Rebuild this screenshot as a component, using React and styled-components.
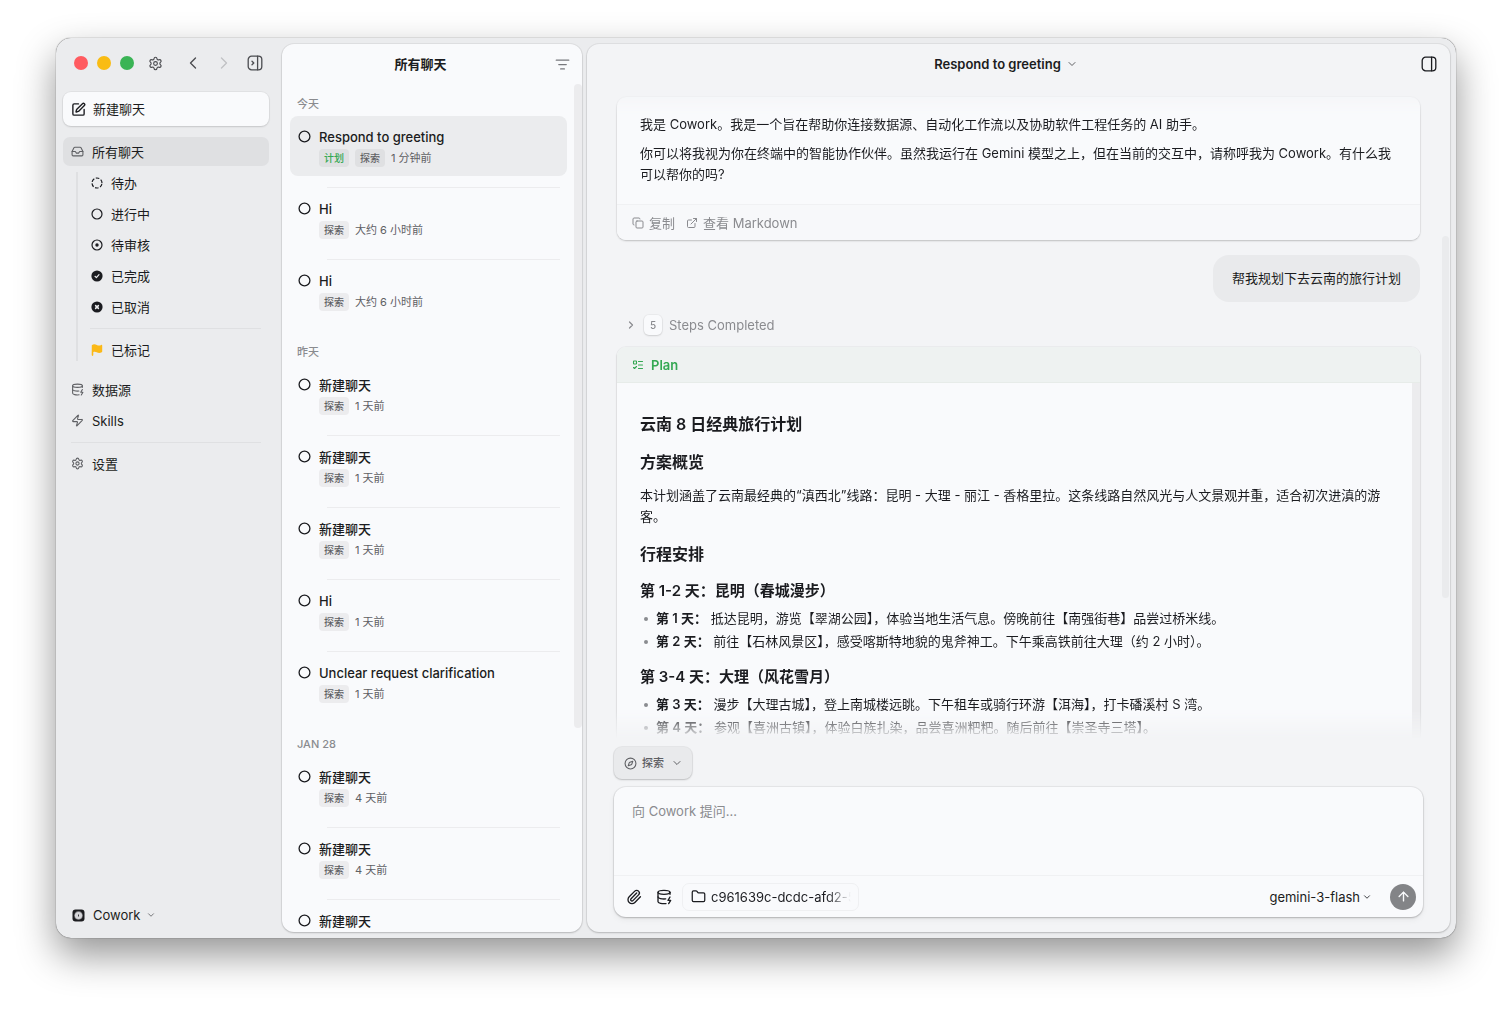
import { Fragment } from "react";
import styled, { createGlobalStyle, css } from "styled-components";
import {
  ArrowUp,
  ChevronDown,
  ChevronLeft,
  ChevronRight,
  Circle,
  Compass,
  Copy,
  DatabaseZap,
  ExternalLink,
  Folder,
  Inbox,
  ListFilter,
  ListTodo,
  Paperclip,
  Settings,
  SquarePen,
  Zap,
} from "lucide-react";

const colors = {
  window: "#ebecee",
  panel: "#f9fafc",
  main: "#f3f4f6",
  text: "#1b1c20",
  gray: "#5f6064",
  muted: "#8a8b8f",
  line: "#dfe0e2",
  softLine: "#ececee",
  green: "#34a853",
};

const groups = [
  {
    label: "今天",
    chats: [
      { title: "Respond to greeting", time: "1 分钟前", plan: true, active: true },
      { title: "Hi", time: "大约 6 小时前" },
      { title: "Hi", time: "大约 6 小时前" },
    ],
  },
  {
    label: "昨天",
    chats: [
      { title: "新建聊天", time: "1 天前" },
      { title: "新建聊天", time: "1 天前" },
      { title: "新建聊天", time: "1 天前" },
      { title: "Hi", time: "1 天前" },
      { title: "Unclear request clarification", time: "1 天前" },
    ],
  },
  {
    label: "JAN 28",
    chats: [
      { title: "新建聊天", time: "4 天前" },
      { title: "新建聊天", time: "4 天前" },
      { title: "新建聊天" },
    ],
  },
];

const days = [
  {
    title: "第 1-2 天：昆明（春城漫步）",
    items: [
      ["第 1 天：", "抵达昆明，游览【翠湖公园】，体验当地生活气息。傍晚前往【南强街巷】品尝过桥米线。"],
      ["第 2 天：", "前往【石林风景区】，感受喀斯特地貌的鬼斧神工。下午乘高铁前往大理（约 2 小时）。"],
    ],
  },
  {
    title: "第 3-4 天：大理（风花雪月）",
    items: [
      ["第 3 天：", "漫步【大理古城】，登上南城楼远眺。下午租车或骑行环游【洱海】，打卡磻溪村 S 湾。"],
      ["第 4 天：", "参观【喜洲古镇】，体验白族扎染，品尝喜洲粑粑。随后前往【崇圣寺三塔】。"],
    ],
  },
];

function PanelIcon({ withArrow }) {
  return (
    <svg width="16" height="16" viewBox="0 0 16 16" fill="none" stroke="currentColor" strokeWidth="1.3" strokeLinecap="round" strokeLinejoin="round">
      <rect x="1.2" y="1.2" width="13.6" height="13.6" rx="3.4" />
      <path d="M10.6 1.2v13.6" />
      {withArrow && <path d="M5 6.200 6.800 8 5 9.800" />}
    </svg>
  );
}

function DashedCircle() {
  return (
    <svg width="12" height="12" viewBox="0 0 12 12" fill="none" stroke="currentColor" strokeWidth="1.2">
      <circle cx="6" cy="6" r="5" strokeDasharray="3.6 1.636" strokeDashoffset="-.8" />
    </svg>
  );
}

function ReviewIcon() {
  return (
    <svg width="12" height="12" viewBox="0 0 12 12" fill="none">
      <circle cx="6" cy="6" r="5" stroke="currentColor" strokeWidth="1.2" />
      <circle cx="6" cy="6" r="1.7" fill="currentColor" />
    </svg>
  );
}

function DoneIcon() {
  return (
    <svg width="12" height="12" viewBox="0 0 12 12" fill="none">
      <circle cx="6" cy="6" r="5.6" fill="currentColor" />
      <path d="m4 6.3 1.4 1.3L8 4.7" stroke={colors.window} strokeWidth="1.2" strokeLinecap="round" strokeLinejoin="round" />
    </svg>
  );
}

function CancelIcon() {
  return (
    <svg width="12" height="12" viewBox="0 0 12 12" fill="none">
      <circle cx="6" cy="6" r="5.6" fill="currentColor" />
      <path d="m4.6 4.6 2.8 2.8M7.4 4.6 4.6 7.4" stroke={colors.window} strokeWidth="1.5" strokeLinecap="round" />
    </svg>
  );
}

function FlagIcon() {
  return (
    <svg width="12" height="12" viewBox="0 0 12 12">
      <path
        d="M.8 1.2C2.4-.1 4.200.1 5.800 1c1.500.8 3 .7 4.400-.1.500-.3 1 0 1 .5v6c0 .4-.2.7-.5.9-1.600.9-3.300.9-5 0-1.200-.6-2.300-.7-3.400-.2v3c0 .5-.3.8-.8.8s-.8-.3-.8-.8z"
        fill="#fbb917"
      />
    </svg>
  );
}

function WorkspaceIcon() {
  return (
    <svg width="13" height="13" viewBox="0 0 13 13">
      <rect x=".5" y=".5" width="12" height="12" rx="3" fill="#1d1d20" />
      <circle cx="6.5" cy="6.5" r="4.4" fill="#77777b" />
      <circle cx="6.5" cy="6.5" r="3.6" fill="#d6d6d9" />
      <path d="M6.500 5.500v2" stroke="#3a3a3e" strokeWidth="1" />
    </svg>
  );
}

function Sidebar() {
  return (
    <SidebarBox>
      <TitleBar>
        <Lights>
          <Light $color="#ff5b60" />
          <Light $color="#f9bc14" />
          <Light $color="#3ab455" />
        </Lights>
        <IconBtn aria-label="设置"><Settings size={15} strokeWidth={1.8} /></IconBtn>
        <NavBtns>
          <IconBtn aria-label="后退"><ChevronLeft size={20} strokeWidth={1.6} /></IconBtn>
          <IconBtn aria-label="前进" $faded><ChevronRight size={20} strokeWidth={1.6} /></IconBtn>
          <IconBtn aria-label="收起侧栏"><PanelIcon withArrow /></IconBtn>
        </NavBtns>
      </TitleBar>
      <NewChat>
        <SquarePen size={15} strokeWidth={2.2} />
        新建聊天
      </NewChat>
      <Nav>
        <NavRow $active><Inbox size={13} />所有聊天</NavRow>
        <Tree>
          <TreeLine />
          <TreeList>
            <SubRow><DashedCircle />待办</SubRow>
            <SubRow><Circle size={12} strokeWidth={2.4} />进行中</SubRow>
            <SubRow><ReviewIcon />待审核</SubRow>
            <SubRow><DoneIcon />已完成</SubRow>
            <SubRow><CancelIcon />已取消</SubRow>
            <Divider />
            <SubRow><FlagIcon />已标记</SubRow>
          </TreeList>
        </Tree>
        <NavRow><DatabaseZap size={13} />数据源</NavRow>
        <NavRow><Zap size={13} />Skills</NavRow>
        <Divider $inset />
        <NavRow><Settings size={13} />设置</NavRow>
      </Nav>
      <Workspace>
        <WorkspaceIcon />
        Cowork
        <ChevronDown size={10} />
      </Workspace>
    </SidebarBox>
  );
}

function ChatRow({ chat }) {
  return (
    <ChatItem $active={chat.active}>
      <Circle size={13} strokeWidth={2.4} />
      <ChatInfo>
        <ChatTitle>{chat.title}</ChatTitle>
        {chat.time && (
          <ChatMeta>
            {chat.plan && <Tag $active $green>计划</Tag>}
            <Tag $active={chat.active}>探索</Tag>
            <span>{chat.time}</span>
          </ChatMeta>
        )}
      </ChatInfo>
    </ChatItem>
  );
}

function ChatList() {
  return (
    <ListPanel>
      <ListHeader>
        <ListTitle>所有聊天</ListTitle>
        <FilterBtn aria-label="筛选"><ListFilter size={15} strokeWidth={2} /></FilterBtn>
      </ListHeader>
      <ListBody>
        <ListScroll>
          {groups.map((group) => (
            <Group key={group.label}>
              <GroupLabel>{group.label}</GroupLabel>
              {group.chats.map((chat, i) => (
                <Fragment key={i}>
                  {i > 0 && <ChatSeparator />}
                  <ChatRow chat={chat} />
                </Fragment>
              ))}
            </Group>
          ))}
        </ListScroll>
        <ListThumb />
      </ListBody>
    </ListPanel>
  );
}

function Plan() {
  return (
    <PlanCard>
      <PlanHeader>
        <ListTodo size={12} strokeWidth={2.2} />
        Plan
      </PlanHeader>
      <PlanBody>
        <PlanText>
          <Heading>云南 8 日经典旅行计划</Heading>
          <Heading>方案概览</Heading>
          <Paragraph>
            本计划涵盖了云南最经典的“滇西北”线路：昆明 - 大理 - 丽江 - 香格里拉。这条线路自然风光与人文景观并重，适合初次进滇的游客。
          </Paragraph>
          <Heading>行程安排</Heading>
          {days.map((day) => (
            <Fragment key={day.title}>
              <DayTitle>{day.title}</DayTitle>
              <DayList>
                {day.items.map(([label, text]) => (
                  <li key={label}>
                    <span>
                      <strong>{label}</strong> {text}
                    </span>
                  </li>
                ))}
              </DayList>
            </Fragment>
          ))}
        </PlanText>
        <PlanThumb />
      </PlanBody>
    </PlanCard>
  );
}

function Composer() {
  return (
    <Dock>
      <ModeBtn>
        <Compass size={13} />
        探索
        <ChevronDown size={12} />
      </ModeBtn>
      <ComposerBox>
        <Prompt aria-label="消息" placeholder="向 Cowork 提问..." />
        <ComposerBar>
          <ToolBtn aria-label="添加附件"><Paperclip size={16} /></ToolBtn>
          <ToolBtn aria-label="数据源"><DatabaseZap size={16} /></ToolBtn>
          <FolderChip>
            <Folder size={15} strokeWidth={2} />
            <FolderName>c961639c-dcdc-afd2-5</FolderName>
          </FolderChip>
          <ModelBtn>
            gemini-3-flash
            <ChevronDown size={10} />
          </ModelBtn>
          <SendBtn aria-label="发送"><ArrowUp size={15} strokeWidth={2.2} /></SendBtn>
        </ComposerBar>
      </ComposerBox>
    </Dock>
  );
}

export default function App() {
  return (
    <>
      <GlobalStyle />
      <Desktop>
        <Window lang="zh-CN">
          <Sidebar />
          <ChatList />
          <MainPanel>
            <MainHeader>
              <MainTitle>
                Respond to greeting
                <ChevronDown size={12} />
              </MainTitle>
              <HeaderBtn aria-label="侧面板"><PanelIcon /></HeaderBtn>
            </MainHeader>
            <Thread>
              <Card>
                <CardText>
                  <Paragraph>
                    我是 Cowork。我是一个旨在帮助你连接数据源、自动化工作流以及协助软件工程任务的 AI 助手。
                  </Paragraph>
                  <Paragraph>
                    你可以将我视为你在终端中的智能协作伙伴。虽然我运行在 Gemini 模型之上，但在当前的交互中，请称呼我为 Cowork。有什么我可以帮你的吗?
                  </Paragraph>
                </CardText>
                <CardFooter>
                  <CardAction><Copy size={12} />复制</CardAction>
                  <CardAction><ExternalLink size={12} />查看 Markdown</CardAction>
                </CardFooter>
              </Card>
              <Bubble>帮我规划下去云南的旅行计划</Bubble>
              <Steps>
                <ChevronRight size={12} strokeWidth={2.4} />
                <StepCount>5</StepCount>
                Steps Completed
              </Steps>
              <Plan />
            </Thread>
            <ThreadThumb />
            <Composer />
          </MainPanel>
        </Window>
      </Desktop>
    </>
  );
}

const GlobalStyle = createGlobalStyle`
  * {
    box-sizing: border-box;
  }
  body {
    margin: 0;
    background: #fff;
  }
  body, button, textarea {
    font-family: Inter, "Noto Sans CJK SC", sans-serif;
    font-size: 13px;
    line-height: 20px;
    color: ${colors.text};
  }
  button {
    padding: 0;
    border: none;
    background: none;
    cursor: pointer;
  }
  svg {
    flex-shrink: 0;
  }
`;
const Desktop = styled.div`
  display: flex;
  height: 100vh;
  padding: 38px 56px 74px;
`;
const Window = styled.div`
  flex: 1;
  min-width: 0;
  display: grid;
  grid-template-columns: 220px 300px minmax(0, 1fr);
  column-gap: 5px;
  padding: 6px 6px 6px 1px;
  border-radius: 15px;
  background: ${colors.window};
  box-shadow: 0 0 1px rgba(0, 0, 0, 0.8), 0 17px 38px rgba(0, 0, 0, 0.42);
`;
const SidebarBox = styled.aside`
  display: flex;
  flex-direction: column;
  min-height: 0;
  padding: 0 8px 5px 6px;
`;
const TitleBar = styled.div`
  display: flex;
  align-items: center;
  height: 38px;
  padding: 0 4px 0 11px;
`;
const Lights = styled.div`
  display: flex;
  gap: 9px;
  margin-right: 11px;
`;
const Light = styled.span`
  width: 14px;
  height: 14px;
  border-radius: 50%;
  background: ${(props) => props.$color};
`;
const IconBtn = styled.button`
  display: flex;
  align-items: center;
  justify-content: center;
  width: 20px;
  height: 24px;
  color: ${(props) => (props.$faded ? "#c0c1c4" : "#4b4c50")};
`;
const NavBtns = styled.div`
  display: flex;
  gap: 11px;
  margin-left: auto;
`;
const NewChat = styled.button`
  display: flex;
  align-items: center;
  gap: 7px;
  height: 34px;
  margin-top: 10px;
  padding: 0 8px;
  border-radius: 8px;
  background: ${colors.panel};
  box-shadow: 0 0 0 1px rgba(0, 0, 0, 0.04), 0 1px 2px rgba(0, 0, 0, 0.12);
`;
const Nav = styled.nav`
  display: flex;
  flex-direction: column;
  gap: 2px;
  margin-top: 11px;
`;
const NavRow = styled.button`
  display: flex;
  align-items: center;
  gap: 8px;
  height: 29px;
  padding: 0 8px;
  border-radius: 7px;
  background: ${(props) => (props.$active ? colors.line : "transparent")};
  svg {
    color: ${colors.gray};
  }
`;
const Tree = styled.div`
  display: flex;
  gap: 5px;
  margin-bottom: 9px;
  padding-left: 13px;
`;
const TreeLine = styled.span`
  width: 2px;
  margin: 4px 0 3px;
  background: ${colors.line};
`;
const TreeList = styled.div`
  flex: 1;
  display: flex;
  flex-direction: column;
  gap: 2px;
`;
const SubRow = styled(NavRow)`
  svg {
    color: ${colors.text};
  }
`;
const Divider = styled.hr`
  width: auto;
  height: 1px;
  margin: 5px 8px 4px ${(props) => (props.$inset ? "8px" : "7px")};
  border: none;
  background: ${colors.line};
`;
const Workspace = styled.button`
  display: flex;
  align-items: center;
  gap: 8px;
  height: 24px;
  margin-top: auto;
  padding: 0 9px;
  svg:last-child {
    margin-left: -3px;
    color: ${colors.gray};
  }
`;

const panel = css`
  display: flex;
  flex-direction: column;
  min-width: 0;
  min-height: 0;
  border-radius: 12px;
  overflow: hidden;
  box-shadow: 0 0 0 1px rgba(0, 0, 0, 0.05), 0 1px 2px rgba(0, 0, 0, 0.18);
`;
const ListPanel = styled.section`
  ${panel}
  background: ${colors.panel};
`;
const ListHeader = styled.header`
  display: flex;
  align-items: center;
  height: 40px;
  padding: 0 9px 0 8px;
`;
const ListTitle = styled.h1`
  flex: 1;
  margin: 0;
  font-size: 13px;
  font-weight: 600;
  text-align: center;
`;
const FilterBtn = styled(IconBtn)`
  width: 22px;
  color: #77787c;
`;
const ListBody = styled.div`
  flex: 1;
  min-height: 0;
  display: flex;
`;
const ListScroll = styled.div`
  flex: 1;
  display: flex;
  flex-direction: column;
  gap: 20px;
  padding: 8px 7px 0 8px;
  overflow: hidden;
`;
const ListThumb = styled.span`
  width: 8px;
  height: 76%;
  border-radius: 4px;
  background: ${colors.softLine};
`;
const Group = styled.div`
  flex-shrink: 0;
`;
const GroupLabel = styled.h2`
  margin: 0;
  padding-left: 7px;
  font-size: 11px;
  font-weight: 500;
  line-height: 24px;
  color: ${colors.muted};
`;
const ChatItem = styled.article`
  display: flex;
  gap: 8px;
  height: 60px;
  padding: 11px 8px 9px;
  border-radius: 8px;
  background: ${(props) => (props.$active ? colors.window : "transparent")};
  > svg {
    margin-top: 3px;
  }
`;
const ChatInfo = styled.div`
  display: flex;
  flex-direction: column;
  gap: 2px;
`;
const ChatTitle = styled.h3`
  margin: 0;
  font-size: 13px;
  font-weight: 500;
  line-height: 20px;
`;
const ChatMeta = styled.div`
  display: flex;
  align-items: center;
  gap: 6px;
  font-size: 11px;
  line-height: 18px;
  color: ${colors.gray};
`;
const Tag = styled.span`
  padding: 0 5px;
  border-radius: 4px;
  font-size: 10px;
  font-weight: 500;
  color: ${(props) => (props.$green ? colors.green : colors.gray)};
  background: ${(props) => (props.$active ? colors.line : colors.softLine)};
`;
const ChatSeparator = styled.div`
  height: 12px;
  margin: 0 7px 0 37px;
  border-bottom: 1px solid ${colors.softLine};
`;

const MainPanel = styled.main`
  ${panel}
  position: relative;
  background: ${colors.main};
`;
const MainHeader = styled.header`
  display: flex;
  align-items: center;
  justify-content: center;
  height: 40px;
  padding: 0 9px 0 8px;
`;
const MainTitle = styled.button`
  flex: 1;
  display: flex;
  align-items: center;
  justify-content: center;
  gap: 5px;
  font-weight: 600;
  svg {
    color: ${colors.gray};
  }
`;
const HeaderBtn = styled(IconBtn)`
  width: 24px;
  color: ${colors.text};
`;
const Thread = styled.div`
  flex: 1;
  min-height: 0;
  display: flex;
  flex-direction: column;
  padding: 13px 30px 0;
  overflow: hidden;
  mask-image: linear-gradient(to bottom, transparent, #000 32px, #000 calc(100% - 28px), transparent);
`;
const ThreadThumb = styled.span`
  position: absolute;
  top: 192px;
  right: 1px;
  width: 7px;
  height: 362px;
  border-radius: 4px;
  background: #eaebed;
`;
const Card = styled.article`
  flex-shrink: 0;
  border-radius: 9px;
  background: ${colors.panel};
  overflow: hidden;
  box-shadow: 0 0 0 1px rgba(0, 0, 0, 0.03), 0 1px 2px rgba(0, 0, 0, 0.2);
`;
const CardText = styled.div`
  display: flex;
  flex-direction: column;
  gap: 8px;
  padding: 17px 22px 19px 23px;
`;
const Paragraph = styled.p`
  margin: 0;
  line-height: 21px;
`;
const CardFooter = styled.footer`
  display: flex;
  align-items: center;
  gap: 11px;
  height: 36px;
  padding: 0 15px;
  border-top: 1px solid #f0f1f3;
  background: #f7f8fa;
`;
const CardAction = styled.button`
  display: flex;
  align-items: center;
  gap: 5px;
  color: ${colors.muted};
`;
const Bubble = styled.div`
  align-self: flex-end;
  flex-shrink: 0;
  margin-top: 15px;
  padding: 13px 19px;
  border-radius: 16px;
  line-height: 21px;
  background: #e9eaec;
`;
const Steps = styled.button`
  align-self: flex-start;
  flex-shrink: 0;
  display: flex;
  align-items: center;
  gap: 7px;
  height: 22px;
  margin: 12px 0 11px;
  padding-left: 8px;
  color: ${colors.muted};
`;
const StepCount = styled.span`
  width: 18px;
  height: 20px;
  border-radius: 5px;
  font-size: 10px;
  font-weight: 500;
  text-align: center;
  background: ${colors.panel};
  box-shadow: 0 0 0 1px rgba(0, 0, 0, 0.04), 0 1px 2px rgba(0, 0, 0, 0.12);
`;
const PlanCard = styled(Card)``;
const PlanHeader = styled.header`
  display: flex;
  align-items: center;
  gap: 7px;
  height: 36px;
  padding: 0 15px;
  border-bottom: 1px solid #e7ece9;
  font-weight: 600;
  color: ${colors.green};
  background: #eef2f1;
`;
const PlanBody = styled.div`
  display: flex;
`;
const PlanText = styled.div`
  flex: 1;
  padding: 29px 14px 24px 23px;
`;
const PlanThumb = styled.span`
  width: 8px;
  background: ${colors.softLine};
`;
const Heading = styled.h2`
  margin: 0;
  font-size: 16px;
  font-weight: 600;
  line-height: 24px;
  & + & {
    margin-top: 14px;
  }
  & + ${Paragraph} {
    margin-top: 11px;
  }
  ${Paragraph} + & {
    margin-top: 15px;
  }
`;
const DayTitle = styled.h3`
  margin: 14px 0 7px;
  font-size: 15px;
  font-weight: 600;
  line-height: 21px;
`;
const DayList = styled.ul`
  display: flex;
  flex-direction: column;
  gap: 2px;
  margin: 0;
  padding: 0 0 0 4px;
  list-style: none;
  line-height: 21px;
  strong {
    font-weight: 600;
  }
  li {
    display: flex;
    align-items: center;
    gap: 8px;
  }
  li::before {
    content: "";
    width: 4px;
    height: 4px;
    border-radius: 50%;
    background: ${colors.muted};
  }
`;

const Dock = styled.div`
  display: flex;
  flex-direction: column;
  gap: 8px;
  padding: 8px 27px 15px;
`;
const ModeBtn = styled.button`
  align-self: flex-start;
  display: flex;
  align-items: center;
  gap: 5px;
  height: 32px;
  padding: 0 9px 0 10px;
  border-radius: 8px;
  font-size: 11px;
  font-weight: 500;
  color: ${colors.gray};
  background: #e9eaec;
  box-shadow: 0 0 0 1px rgba(0, 0, 0, 0.05), 0 1px 2px rgba(0, 0, 0, 0.18);
  svg:last-child {
    margin-left: 2px;
  }
`;
const ComposerBox = styled.div`
  display: flex;
  flex-direction: column;
  border-radius: 12px;
  background: ${colors.panel};
  box-shadow: 0 0 0 1px rgba(0, 0, 0, 0.05), 0 1px 2px rgba(0, 0, 0, 0.2), 0 3px 6px rgba(0, 0, 0, 0.05);
`;
const Prompt = styled.textarea`
  height: 88px;
  padding: 14px 18px;
  border: none;
  outline: none;
  resize: none;
  background: transparent;
  &::placeholder {
    color: ${colors.muted};
  }
`;
const ComposerBar = styled.div`
  display: flex;
  align-items: center;
  height: 42px;
  padding: 0 7px 0 5px;
  border-top: 1px solid #f0f1f3;
`;
const ToolBtn = styled.button`
  display: flex;
  align-items: center;
  justify-content: center;
  width: 30px;
  height: 28px;
`;
const FolderChip = styled.button`
  display: flex;
  align-items: center;
  gap: 5px;
  height: 28px;
  margin-left: 3px;
  padding: 0 7px 0 8px;
  border: 1px solid #eff0f2;
  border-radius: 7px;
`;
const FolderName = styled.span`
  width: 140px;
  overflow: hidden;
  white-space: nowrap;
  text-align: left;
  mask-image: linear-gradient(to right, #000 calc(100% - 24px), transparent);
`;
const ModelBtn = styled.button`
  display: flex;
  align-items: center;
  gap: 2px;
  margin: 0 18px 0 auto;
`;
const SendBtn = styled.button`
  display: flex;
  align-items: center;
  justify-content: center;
  width: 26px;
  height: 26px;
  border-radius: 50%;
  color: ${colors.panel};
  background: #838487;
`;
